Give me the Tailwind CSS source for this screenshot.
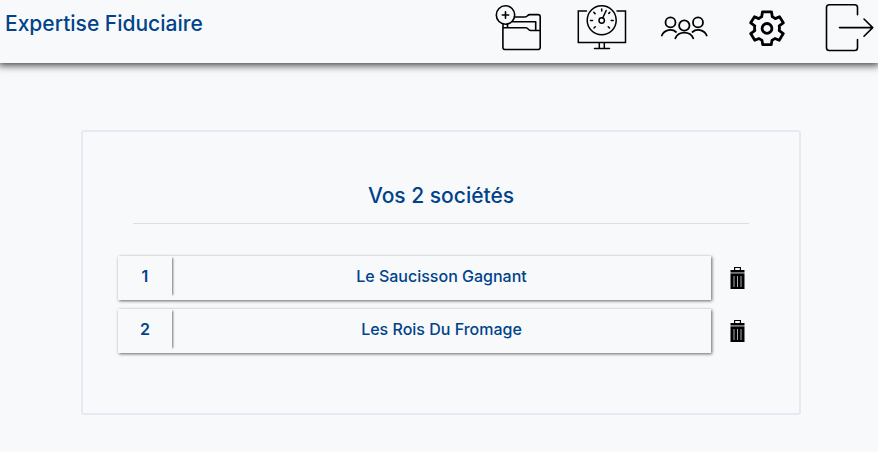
<!DOCTYPE html>
<html lang="fr">
<head>
<meta charset="utf-8">
<meta name="viewport" content="width=device-width, initial-scale=1">
<title>Expertise Fiduciaire</title>
<script src="https://cdn.jsdelivr.net/npm/@tailwindcss/browser@4"></script>
</head>
<body class="min-h-screen bg-[#f8f9fb] font-['Inter',sans-serif] font-medium text-[#00438a]">
<header class="flex h-[63px] items-start justify-between pl-[5px] shadow-[0_0_8px_2px_#000000cc]">
  <a href="#" class="pt-2 text-[21px] leading-8">Expertise Fiduciaire</a>
  <nav class="flex items-start text-black" aria-label="Menu principal">
    <a href="#" aria-label="Nouveau dossier" class="mr-[22px]">
      <svg class="h-[60px] w-[60px]" viewBox="1 0 60 60" fill="none" stroke="currentColor" stroke-width="1.6" stroke-linejoin="round" stroke-linecap="round">
        <circle cx="15.500" cy="15" r="9.200"/><path d="M15.500 11.800v6.400M12.300 15h6.400"/>
        <path d="M24.500 17H35q1.500 0 2.500-1.200t2.500-1.200h8q2.200 0 2.200 2.200v30.400q0 2.300-2.300 2.300H15.200q-2.300 0-2.300-2.300V27.700H36q1.200 0 2 1.200t2.500 1.600H50M13 24v4M17.500 24v3.500M22.500 21.700h23.200v8.500"/>
      </svg>
    </a>
    <a href="#" aria-label="Tableau de bord" class="mr-[22px]">
      <svg class="h-[60px] w-[60px]" viewBox="1 0 60 60" fill="none" stroke="currentColor" stroke-width="1.5" stroke-linecap="round">
        <path d="M14.500 11H6.300v31.500h47.200V11H45M27.300 43v5M32.300 43v5M22.500 48.500h15"/>
        <circle cx="29.700" cy="20.300" r="14.500"/><circle cx="29.700" cy="20.500" r="2.700"/>
        <path d="M30.700 18l3.500-7.500M29.700 9v2M21.800 12.300l1.300 1.300M18.500 20.500h2M22 28l1.300-1.300M37.800 12.400l-1 1M39.200 20.500h2M37.500 28l-1.300-1.300"/>
      </svg>
    </a>
    <a href="#" aria-label="Utilisateurs" class="mr-[22px]">
      <svg class="h-[60px] w-[60px]" viewBox="1 0 60 60" fill="none" stroke="currentColor" stroke-width="1.8" stroke-linecap="round">
        <circle cx="16.500" cy="22.400" r="5"/><circle cx="44" cy="22.400" r="5"/><circle cx="30.300" cy="25.500" r="5.200"/>
        <path d="M7.800 35.500c2.500-6 10.500-7 14.200-3.500M52.700 35.500c-2.500-6-10.500-7-14.200-3.500M21.300 38.300c3.300-7.500 14.700-7.500 18 0"/>
      </svg>
    </a>
    <a href="#" aria-label="Paramètres" class="mr-[16px]">
      <svg class="h-[60px] w-[60px]" viewBox="-30 -28 60 60" fill="none" stroke="currentColor" stroke-width="2.800" stroke-linejoin="round">
        <circle cx="0" cy="0.400" r="4.900"/>
        <path d="M-4.500-16.200H4.500L5.300-11.200Q7-10.500 8.300-9.400L12.500-11.200L16.300-5.200L12.200-2.200Q12.700 0 12.200 2.600L16.300 5.600L12.200 12.200L8 10.500Q6.700 11.500 5 12.200L4.300 16.600H-4.300L-5 12.200Q-6.700 11.500-8 10.500L-12.200 12.200L-16.300 5.600L-12.200 2.600Q-12.700 0-12.200-2.200L-16.300-5.200L-12.500-11.200L-8.300-9.400Q-7-10.500-5.300-11.200Z"/>
      </svg>
    </a>
    <a href="#" aria-label="Déconnexion">
      <svg class="h-[60px] w-[65px]" viewBox="0 0 65 60" fill="none" stroke="currentColor" stroke-width="1.6" stroke-linecap="round" stroke-linejoin="round">
        <path d="M44.500 14.800V7.500q0-2.800-2.800-2.800H16.300q-2.800 0-2.800 2.800v40.200q0 2.800 2.800 2.800h25.400q2.800 0 2.800-2.800v-8.200M26.500 27.600h33.200M51 19l8.700 8.600L51 36.200"/>
      </svg>
    </a>
  </nav>
</header>

<main class="pt-[67px] pr-[77px] pb-[37px] pl-[81px]">
  <section class="rounded-[3px] border-2 border-[#e7e9f2] pt-[48px] pr-[50px] pb-[60px] pl-[35px]">
    <h1 class="ml-[15px] border-b border-[#dcdee2] pb-[11px] text-center text-[21px] leading-8">Vos 2 sociétés</h1>
    <ul class="mt-8 mr-1 flex flex-col gap-[9px] text-base leading-6">
      <li class="flex items-center justify-between gap-[18px]">
        <a href="#" class="flex h-11 grow items-start bg-[#f8f9fb] text-center shadow-[1px_1px_3px_#00000099]">
          <span class="h-[41px] w-[54px] pt-[8px] font-semibold shadow-[3px_0_2px_-2px_#00000088]">1</span>
          <span class="grow pt-[8px]">Le Saucisson Gagnant</span>
        </a>
        <button type="button" aria-label="Supprimer Le Saucisson Gagnant" class="text-black">
          <svg class="h-6 w-4" viewBox="0 0 16 24" fill="currentColor">
            <path d="M5 4V1h7v3h-1.200V2H6.200v2zM1.500 4h14v2h-14z"/><path fill="#777" d="M1.500 6h14v1.500h-14z"/><path d="M1.500 7.500h14V23h-14z"/><path stroke="#aaa" d="M5 10v11M8.500 10v11M12 10v11"/>
          </svg>
        </button>
      </li>
      <li class="flex items-center justify-between gap-[18px]">
        <a href="#" class="flex h-11 grow items-start bg-[#f8f9fb] text-center shadow-[1px_1px_3px_#00000099]">
          <span class="h-[41px] w-[54px] pt-[8px] font-semibold shadow-[3px_0_2px_-2px_#00000088]">2</span>
          <span class="grow pt-[8px]">Les Rois Du Fromage</span>
        </a>
        <button type="button" aria-label="Supprimer Les Rois Du Fromage" class="text-black">
          <svg class="h-6 w-4" viewBox="0 0 16 24" fill="currentColor">
            <path d="M5 4V1h7v3h-1.200V2H6.200v2zM1.500 4h14v2h-14z"/><path fill="#777" d="M1.500 6h14v1.500h-14z"/><path d="M1.500 7.500h14V23h-14z"/><path stroke="#aaa" d="M5 10v11M8.500 10v11M12 10v11"/>
          </svg>
        </button>
      </li>
    </ul>
  </section>
</main>
</body>
</html>
